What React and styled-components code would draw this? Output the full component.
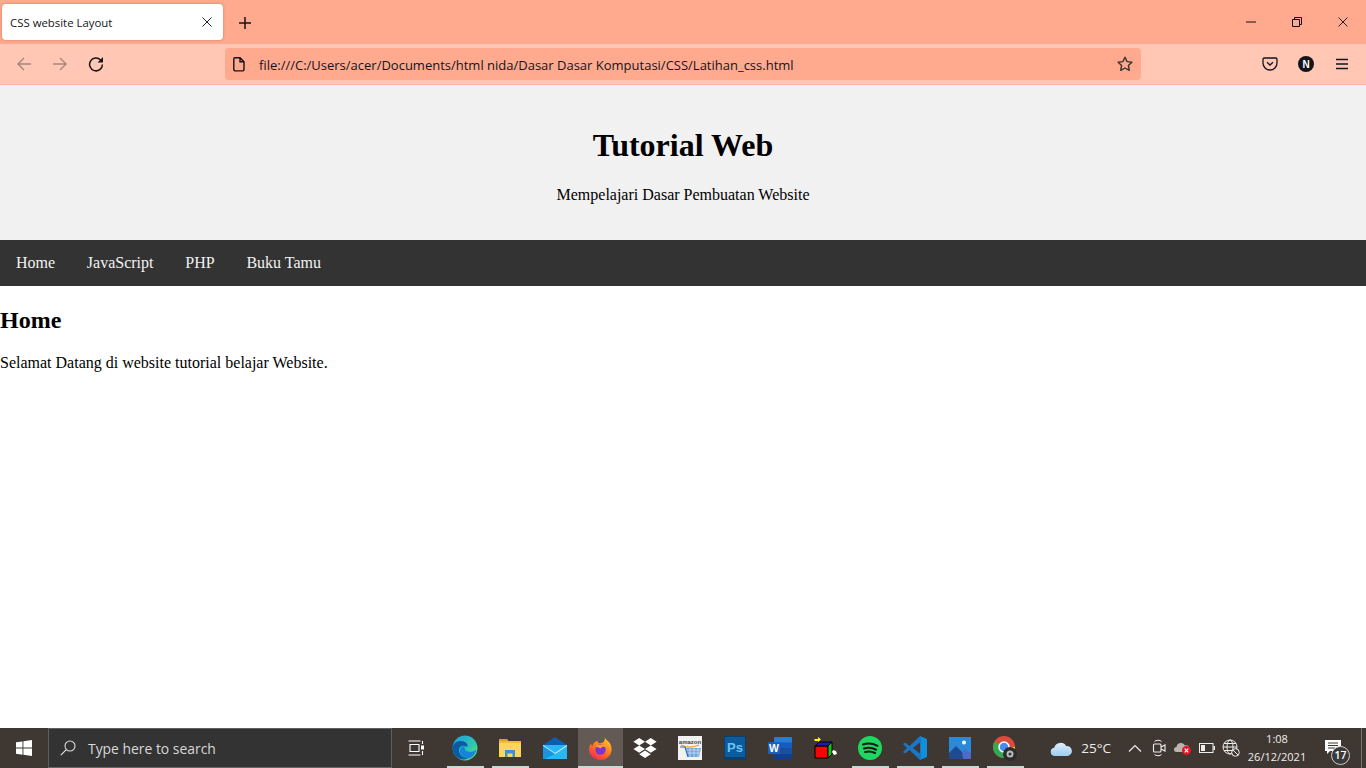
import React from 'react';
import styled, { createGlobalStyle } from 'styled-components';

const GlobalStyle = createGlobalStyle`
    html, body { margin: 0; padding: 0; height: 100%; overflow: hidden; }
    #root { height: 100%; }
`;

const UI_FONT = `'Open Sans', 'Noto Sans', 'Liberation Sans', sans-serif`;

const Screen = styled.div`
    display: flex;
    flex-direction: column;
    height: 768px;
    background: #fff;
`;

const TitleBar = styled.div`
    display: flex;
    align-items: flex-start;
    height: 44px;
    background: #ffa98f;
    flex-shrink: 0;
`;

const Tab = styled.div`
    display: flex;
    align-items: center;
    justify-content: space-between;
    width: 221px;
    height: 36px;
    margin: 4px 0 0 2px;
    padding: 0 11px 0 8px;
    box-sizing: border-box;
    background: #fff;
    border-radius: 4px;
    box-shadow: 0 0 3px rgba(120, 40, 20, .35);
    font: 11.4px ${UI_FONT};
    color: #15141a;
`;

const NewTab = styled.div`
    display: flex;
    align-items: center;
    justify-content: center;
    width: 36px;
    height: 36px;
    margin: 5px 0 0 4px;
`;

const WindowButtons = styled.div`
    display: flex;
    margin-left: auto;
`;

const WindowButton = styled.div`
    display: flex;
    align-items: center;
    justify-content: center;
    width: 46px;
    height: 44px;
`;

const ToolBar = styled.div`
    display: flex;
    align-items: center;
    height: 40px;
    background: #ffc7b4;
    border-bottom: 1px solid #ffb29b;
    flex-shrink: 0;
`;

const NavButtons = styled.div`
    display: flex;
    width: 225px;
    padding-left: 6px;
    box-sizing: border-box;
`;

const ToolButton = styled.div`
    display: flex;
    align-items: center;
    justify-content: center;
    width: 36px;
    height: 32px;
`;

const UrlBar = styled.div`
    display: flex;
    align-items: center;
    width: 916px;
    height: 32px;
    padding: 0 8px 0 7px;
    box-sizing: border-box;
    background: #ffa98f;
    border-radius: 4px;
    color: #15141a;
`;

const UrlText = styled.span`
    flex: 1;
    margin-left: 13px;
    padding-top: 1px;
    font: 13px ${UI_FONT};
    white-space: nowrap;
`;

const ToolRight = styled.div`
    display: flex;
    margin-left: auto;
    padding-right: 6px;
`;

const Avatar = styled.div`
    display: flex;
    align-items: center;
    justify-content: center;
    width: 16px;
    height: 16px;
    border-radius: 50%;
    background: #15141a;
    color: #fff;
    font: bold 10px 'Liberation Sans', sans-serif;
`;

const Page = styled.div`
    flex: 1;
    font-family: 'Liberation Serif', 'Times New Roman', serif;
    font-size: 16px;
    color: #000;
`;

const Header = styled.header`
    height: 155px;
    padding-top: 1px;
    box-sizing: border-box;
    background: #f1f1f1;
    text-align: center;

    h1 {
        margin: 0;
        padding-top: 41px;
        font-size: 32px;
        line-height: 37px;
    }
    p {
        margin: 22px 0 0;
        line-height: 18px;
    }
`;

const Nav = styled.nav`
    display: flex;
    background: #333;
`;

const NavLink = styled.a`
    display: block;
    padding: 14px 15.75px 14px 16px;
    color: #f2f2f2;
    line-height: 18px;
`;

const Main = styled.main`
    h2 {
        margin: 20px 0 0;
        font-size: 24px;
        line-height: 28px;
    }
    p {
        margin: 20px 0 0;
        line-height: 18px;
    }
`;

const TaskBar = styled.div`
    display: flex;
    align-items: stretch;
    height: 40px;
    background: #3f3731;
    color: #fff;
    flex-shrink: 0;
    font-family: ${UI_FONT};
`;

const StartButton = styled.div`
    display: flex;
    align-items: center;
    justify-content: center;
    width: 48px;
`;

const SearchBox = styled.div`
    display: flex;
    align-items: center;
    gap: 12px;
    width: 344px;
    padding-left: 11px;
    box-sizing: border-box;
    background: #333;
    border: 1px solid #5f5f5f;
    border-bottom-color: #666;
    color: #d8d8d8;
    font-size: 13.9px;
`;

const TaskView = styled.div`
    display: flex;
    align-items: center;
    justify-content: center;
    width: 48px;
    margin-right: 2.5px;
`;

const TaskIcon = styled.div`
    position: relative;
    display: flex;
    align-items: center;
    justify-content: center;
    width: 45px;
    flex-shrink: 0;
    background: ${({ active }) => (active ? '#635a55' : 'transparent')};

    &::after {
        content: '';
        display: ${({ running }) => (running ? 'block' : 'none')};
        position: absolute;
        left: ${({ active }) => (active ? '0' : '4px')};
        right: ${({ active }) => (active ? '0' : '4px')};
        bottom: 0;
        height: 2px;
        background: #c6d9d4;
    }
`;

const Tray = styled.div`
    display: flex;
    align-items: center;
    margin-left: auto;
`;

const TrayItem = styled.div`
    display: flex;
    align-items: center;
    justify-content: center;
    width: 24px;
    height: 40px;
`;

const Weather = styled.div`
    display: flex;
    align-items: center;
    gap: 8px;
    margin-right: 12px;
    font-size: 13.5px;
    color: #eee;
`;

const Clock = styled.div`
    display: flex;
    flex-direction: column;
    align-items: center;
    width: 70px;
    margin-left: -1px;
    font-size: 11px;
    line-height: 18px;
    color: #eee;
`;

const Notify = styled.div`
    position: relative;
    display: flex;
    justify-content: center;
    width: 42px;
    height: 40px;
    padding-top: 12px;
    box-sizing: border-box;
`;

const NotifyBadge = styled.div`
    position: absolute;
    top: 18px;
    left: 19px;
    width: 17px;
    height: 17px;
    border: 1px solid #ccc;
    border-radius: 50%;
    background: #3a3a3a;
    color: #fff;
    font-size: 10.5px;
    font-weight: 600;
    line-height: 17px;
    text-align: center;
`;

const ShowDesktop = styled.div`
    align-self: stretch;
    width: 4px;
    margin-left: 7px;
    border-left: 1px solid #7a726c;
`;

const stroke = { fill: 'none', stroke: 'currentColor', strokeWidth: 1.4 };

const Close = () => (
    <svg width="10" height="10" viewBox="0 0 10 10"><path d="M.5 .5l9 9M9.500 .5l-9 9" stroke="#222" strokeWidth="1" /></svg>
);
const Plus = () => (
    <svg width="14" height="14" viewBox="0 0 14 14"><path d="M7 1v12M1 7h12" stroke="#15141a" strokeWidth="1.5" /></svg>
);
const Arrow = ({ flip }) => (
    <svg width="16" height="16" viewBox="0 0 16 16" style={{ transform: flip ? 'scaleX(-1)' : undefined }}>
        <path d="M15 8H2M8 2L2 8l6 6" fill="none" stroke="#a8867a" strokeWidth="1.4" />
    </svg>
);
const Reload = () => (
    <svg width="16" height="16" viewBox="0 0 16 16">
        <path d="M12.600 4A6.400 6.400 0 1 0 14.400 8.500" fill="none" stroke="#15141a" strokeWidth="1.500" />
        <path d="M15 1v5.400H9.600z" fill="#15141a" />
    </svg>
);
const PageIcon = () => (
    <svg width="14" height="16" viewBox="0 0 14 16">
        <path d="M3 1.700h5l4 4v7.600a1.600 1.600 0 0 1-1.600 1.600H3.400a1.600 1.600 0 0 1-1.600-1.600V3a1.400 1.400 0 0 1 1.200-1.300zM8 2v3.700h4" fill="none" stroke="#15141a" strokeWidth="1.400" />
    </svg>
);
const Star = () => (
    <svg width="16" height="16" viewBox="0 0 16 16">
        <path d="M8 1.200l2.100 4.400 4.800.6-3.500 3.300.9 4.800L8 12l-4.300 2.300.9-4.800L1.100 6.200l4.800-.6z" fill="none" stroke="#3c3230" strokeWidth="1.400" strokeLinejoin="round" />
    </svg>
);
const Pocket = () => (
    <svg width="16" height="16" viewBox="0 0 16 16">
        <path d="M2.200 2h11.600c.7 0 1.200.5 1.200 1.200V7a7 7 0 0 1-14 0V3.200C1 2.500 1.500 2 2.200 2z" fill="none" stroke="#15141a" strokeWidth="1.300" />
        <path d="M5 6.200l3 2.800 3-2.800" fill="none" stroke="#15141a" strokeWidth="1.300" />
    </svg>
);
const Menu = () => (
    <svg width="14" height="12" viewBox="0 0 14 12"><path d="M1 1.500h12M1 6h12M1 10.500h12" stroke="#15141a" strokeWidth="1.300" /></svg>
);
const Minimize = () => (
    <svg width="10" height="10" viewBox="0 0 10 10"><path d="M0 5h10" stroke="#111" /></svg>
);
const Restore = () => (
    <svg width="10" height="10" viewBox="0 0 10 10">
        <path d="M.5 2.500h7v7h-7zM2.500 2.500V.5h7v7h-2" fill="none" stroke="#111" />
    </svg>
);

const WindowsLogo = () => (
    <svg width="16" height="16" viewBox="0 0 16 16">
        <path d="M0 2.300l6.500-.9v6.200H0zM7.400 1.300L16 0v7.600H7.400zM0 8.500h6.500v6.200L0 13.800zM7.400 8.500H16V16l-8.600-1.200z" fill="#fff" />
    </svg>
);
const SearchGlass = () => (
    <svg width="16" height="16" viewBox="0 0 16 16">
        <circle cx="10" cy="6" r="5" fill="none" stroke="#ddd" strokeWidth="1.100" />
        <path d="M6.300 9.700L.8 15.200" stroke="#ddd" strokeWidth="1.200" />
    </svg>
);
const TaskViewIcon = () => (
    <svg width="17" height="16" viewBox="0 0 17 16">
        <path d="M.5 1h12M.5 15h12M2 4.500h9v7H2zM14.500 1v3M14.500 11v4" fill="none" stroke="#fff" strokeWidth="1.100" />
        <rect x="13" y="5.500" width="3" height="4" fill="#fff" />
    </svg>
);
const Edge = () => (
    <svg width="26" height="26" viewBox="0 0 24 24">
        <defs>
            <linearGradient id="edgeA" x1="0" y1="0" x2="1" y2="1">
                <stop offset="0" stopColor="#1b9de2" />
                <stop offset=".6" stopColor="#30c8b0" />
                <stop offset="1" stopColor="#6ee86a" />
            </linearGradient>
        </defs>
        <circle cx="12" cy="12" r="11.500" fill="url(#edgeA)" />
        <path d="M.5 12C1 6 7 4.500 11 6c3 1.200 4 3.500 3 5-3-2-8-1-7.500 4 .5 4 5 7 9 6.500-1.500.8-3 1-4.500 1C5 22.500.5 18 .5 12z" fill="#0c59a4" />
        <path d="M13 14.500c2.500 1.500 7 1 9.500-1-1 4.500-4 7.500-7.500 8-3 .5-6.500-2-7.500-5-.8-3 1-6.500 5-6.500-1.500 1-1 3.300.5 4.500z" fill="#1685d6" />
    </svg>
);
const Explorer = () => (
    <svg width="22" height="20" viewBox="0 0 22 20">
        <path d="M0 1h8l2 2.500H0z" fill="#d9a326" />
        <rect y="3" width="22" height="16" fill="#fbd65e" />
        <rect y="3" width="22" height="2" fill="#f0bb3a" />
        <path d="M6 19v-7h10v7h-2.500v-3.500h-5V19z" fill="#3c8fd8" />
    </svg>
);
const Mail = () => (
    <svg width="24" height="22" viewBox="0 0 24 22">
        <path d="M0 8L12 0l12 8v3H0z" fill="#0d5fae" />
        <rect y="8" width="24" height="14" fill="#29b6f6" />
        <path d="M0 8l12 8 12-8v1L12 17 0 9z" fill="#e8f6ff" />
        <path d="M0 22V9l12 8-10 5z" fill="#1a93e0" />
    </svg>
);
const Firefox = () => (
    <svg width="25" height="25" viewBox="0 0 24 24">
        <defs>
            <linearGradient id="foxA" x1="0.8" y1="0" x2="0.2" y2="1">
                <stop offset="0" stopColor="#ffca2c" />
                <stop offset=".5" stopColor="#ff7a1a" />
                <stop offset="1" stopColor="#f5215c" />
            </linearGradient>
        </defs>
        <path d="M16 1c1 3 3 3 5 6 2.500 4 2 9-.5 12-2.500 3-6 4.500-9.500 4C5 22.500.5 17.500 1 12c.2-2 1-3.500 2-5 0 1 .5 2 1.200 2.500C5 7 7 5 9 4.500 9 6 10 7 12 7c3 0 5-3 4-6z" fill="url(#foxA)" />
        <circle cx="12" cy="13" r="5" fill="#7a35d0" />
        <path d="M7 10c3-2 8-3 11 1-2-1-5-1-6 1-1-1-3-1-5-2z" fill="#ff9a2e" />
    </svg>
);
const Dropbox = () => (
    <svg width="24" height="22" viewBox="0 0 24 22">
        <path d="M6.200 1L12 4.700 6.200 8.400.4 4.700zM17.800 1l5.800 3.700-5.800 3.700L12 4.700zM.4 12.100l5.800-3.700 5.800 3.700-5.800 3.700zM17.800 8.400l5.800 3.700-5.800 3.700-5.800-3.700zM6.200 17.200L12 13.500l5.800 3.700L12 21z" fill="#fff" />
    </svg>
);
const Amazon = () => (
    <svg width="24" height="24" viewBox="0 0 24 24">
        <rect width="24" height="24" fill="#f2f2f2" />
        <text x="12" y="7.500" fontSize="6" fontFamily="Liberation Sans, sans-serif" fontWeight="bold" fill="#444" textAnchor="middle">amazon</text>
        <path d="M3 9c5 2.500 12 2.500 18 0" fill="none" stroke="#f39a1c" strokeWidth="1.200" />
        <path d="M8 12h15l-2 9H10z" fill="#6aa5dc" />
        <path d="M8 14h14M9 17h13M12 12v9M16 12v9M20 12v9" stroke="#d8e8f6" strokeWidth=".7" />
        <path d="M2 11h5l3 10" fill="none" stroke="#2f6fb0" strokeWidth="1.200" />
    </svg>
);
const Photoshop = () => (
    <svg width="22" height="24" viewBox="0 0 22 24">
        <rect width="22" height="24" rx="2" fill="#0a3f70" />
        <rect x="1" y="1" width="20" height="20" rx="1" fill="#0b5c9c" />
        <text x="11" y="16" fontSize="13" fontFamily="Liberation Sans, sans-serif" fontWeight="bold" fill="#6cc4f4" textAnchor="middle">Ps</text>
    </svg>
);
const Word = () => (
    <svg width="24" height="22" viewBox="0 0 24 22">
        <rect x="6" y="0" width="18" height="22" rx="1" fill="#2b7cd3" />
        <rect x="6" y="5.500" width="18" height="5.500" fill="#185abd" />
        <rect x="6" y="11" width="18" height="5.500" fill="#1a4fa0" />
        <rect x="6" y="16.500" width="18" height="5.500" fill="#103f91" />
        <rect x="0" y="5" width="12" height="12" rx="1" fill="#1c5fc0" />
        <text x="6" y="15" fontSize="10.500" fontFamily="Liberation Sans, sans-serif" fontWeight="bold" fill="#fff" textAnchor="middle">W</text>
    </svg>
);
const Cube = () => (
    <svg width="24" height="24" viewBox="0 0 24 24">
        <path d="M2 10h13v12H2z" fill="#f00" stroke="#000" />
        <path d="M2 10l4-4h13l-4 4z" fill="#1a1ab4" stroke="#000" />
        <path d="M15 10l4-4v12l-4 4z" fill="#18c018" stroke="#000" />
        <path d="M1 3h4V1l3 2.500L5 6V5H2z" fill="#ff0" />
        <path d="M20 14l3 1 1 3-3 1-2-3z" fill="#fff" />
    </svg>
);
const Spotify = () => (
    <svg width="24" height="24" viewBox="0 0 24 24">
        <circle cx="12" cy="12" r="12" fill="#1ed760" />
        <path d="M5 8.500c5-1.500 10-1 14.500 1.300M6 12.500c4-1.200 8.500-.8 12 1.200M7 16c3.500-1 7-.6 10 1" fill="none" stroke="#191414" strokeWidth="2" strokeLinecap="round" />
    </svg>
);
const VSCode = () => (
    <svg width="24" height="24" viewBox="0 0 24 24">
        <path d="M17 0l7 3v18l-7 3z" fill="#0f8fdc" />
        <path d="M17 0L6.500 10 2 6.500 0 8l4 4-4 4 2 1.500L6.500 14 17 24l1-3V3z" fill="#1a76c4" />
        <path d="M17 6.500L10 12l7 5.500z" fill="#3f3731" />
    </svg>
);
const Photos = () => (
    <svg width="22" height="22" viewBox="0 0 22 22">
        <rect width="22" height="22" fill="#2b8ad8" />
        <circle cx="15" cy="5.500" r="2" fill="#fff" />
        <path d="M0 16l7-7 6 6 3-2 6 4v5H0z" fill="#1f4a90" />
        <path d="M13 15l3-3 6 4v6H14z" fill="#4a6cc8" />
    </svg>
);
const Chrome = () => (
    <svg width="26" height="26" viewBox="0 0 26 26">
        <circle cx="12" cy="12" r="11" fill="#dd4b3d" />
        <path d="M12 12L2.500 6.500A11 11 0 0 0 12 23z" fill="#35a853" />
        <path d="M12 12h11a11 11 0 0 1-11 11z" fill="#fbc02d" />
        <circle cx="12" cy="12" r="5" fill="#4a8af4" stroke="#fff" strokeWidth="1.500" />
        <circle cx="18" cy="19" r="7" fill="#2c2c2c" />
        <circle cx="18" cy="19" r="3.500" fill="#bbb" />
        <circle cx="18" cy="19" r="1.500" fill="#333" />
    </svg>
);
const Cloud = () => (
    <svg width="23" height="17" viewBox="0 0 24 18">
        <defs>
            <linearGradient id="cloudA" x1="0" y1="0" x2="0" y2="1">
                <stop offset="0" stopColor="#dceffc" />
                <stop offset="1" stopColor="#9ccdf0" />
            </linearGradient>
        </defs>
        <path d="M5 17a4.500 4.500 0 0 1-.8-8.900A7 7 0 0 1 17 6.500a5.300 5.300 0 0 1 1.500 10.500z" fill="url(#cloudA)" />
    </svg>
);
const Chevron = () => (
    <svg width="14" height="8" viewBox="0 0 14 8"><path d="M1 7.500l6-6 6 6" fill="none" stroke="#eee" strokeWidth="1.200" /></svg>
);
const MeetIcon = () => (
    <svg width="14" height="18" viewBox="0 0 14 18" style={{ color: '#eee' }}>
        <path d="M2.500 2.500C4 .8 8 .8 9.500 2.500M2.500 15.500c1.500 1.700 5.500 1.700 7 0" {...stroke} strokeWidth="1" />
        <rect x="1.500" y="5" width="7.500" height="8" rx="1" {...stroke} strokeWidth="1.100" />
        <path d="M9 8l4-2v6l-4-2" {...stroke} strokeWidth="1.100" />
    </svg>
);
const OneDriveOff = () => (
    <svg width="18" height="16" viewBox="0 0 18 16">
        <path d="M2.500 12a2.500 2.500 0 0 1 0-5A4.500 4.500 0 0 1 11 5.500 3.300 3.300 0 0 1 13 12z" fill="#b9b6b2" />
        <circle cx="12.500" cy="10.500" r="4.500" fill="#e81123" />
        <path d="M10.700 8.700l3.600 3.600M14.300 8.700l-3.600 3.600" stroke="#fff" strokeWidth="1.200" />
    </svg>
);
const Battery = () => (
    <svg width="16" height="10" viewBox="0 0 16 10">
        <rect x=".5" y=".5" width="13.500" height="9" fill="none" stroke="#eee" />
        <rect x="2" y="2" width="4" height="6" fill="#eee" />
        <rect x="14.500" y="3" width="1.500" height="4" fill="#eee" />
    </svg>
);
const Globe = () => (
    <svg width="18" height="18" viewBox="0 0 18 18" style={{ color: '#eee' }}>
        <circle cx="8" cy="8" r="7" {...stroke} strokeWidth="1" />
        <ellipse cx="8" cy="8" rx="3" ry="7" {...stroke} strokeWidth="1" />
        <path d="M1 8h14M2 4.500h12M2 11.500h12" {...stroke} strokeWidth="1" />
        <circle cx="13.500" cy="13.500" r="3.800" fill="#3f3731" stroke="#eee" />
        <path d="M11 11l5 5" stroke="#eee" />
    </svg>
);
const NotifyIcon = () => (
    <svg width="16" height="14" viewBox="0 0 16 14">
        <path d="M0 0h16v11H5l-3 3v-3H0z" fill="#fff" />
        <path d="M3 3h10M3 5.500h10M3 8h7" stroke="#3f3731" />
    </svg>
);

const taskIcons = [
    { key: 'edge', Icon: Edge, running: true },
    { key: 'explorer', Icon: Explorer, running: true },
    { key: 'mail', Icon: Mail },
    { key: 'firefox', Icon: Firefox, running: true, active: true },
    { key: 'dropbox', Icon: Dropbox },
    { key: 'amazon', Icon: Amazon },
    { key: 'ps', Icon: Photoshop },
    { key: 'word', Icon: Word },
    { key: 'cube', Icon: Cube },
    { key: 'spotify', Icon: Spotify, running: true },
    { key: 'vscode', Icon: VSCode, running: true },
    { key: 'photos', Icon: Photos, running: true },
    { key: 'chrome', Icon: Chrome, running: true },
];

const navLinks = ['Home', 'JavaScript', 'PHP', 'Buku Tamu'];

export default () => {
    return (
        <Screen>
            <GlobalStyle />
            <TitleBar>
                <Tab>
                    <span>CSS website Layout</span>
                    <Close />
                </Tab>
                <NewTab><Plus /></NewTab>
                <WindowButtons>
                    <WindowButton><Minimize /></WindowButton>
                    <WindowButton><Restore /></WindowButton>
                    <WindowButton><Close /></WindowButton>
                </WindowButtons>
            </TitleBar>
            <ToolBar>
                <NavButtons>
                    <ToolButton><Arrow /></ToolButton>
                    <ToolButton><Arrow flip /></ToolButton>
                    <ToolButton><Reload /></ToolButton>
                </NavButtons>
                <UrlBar>
                    <PageIcon />
                    <UrlText>file:///C:/Users/acer/Documents/html nida/Dasar Dasar Komputasi/CSS/Latihan_css.html</UrlText>
                    <Star />
                </UrlBar>
                <ToolRight>
                    <ToolButton><Pocket /></ToolButton>
                    <ToolButton><Avatar>N</Avatar></ToolButton>
                    <ToolButton><Menu /></ToolButton>
                </ToolRight>
            </ToolBar>
            <Page>
                <Header>
                    <h1>Tutorial Web</h1>
                    <p>Mempelajari Dasar Pembuatan Website</p>
                </Header>
                <Nav>
                    {navLinks.map(link => <NavLink key={link}>{link}</NavLink>)}
                </Nav>
                <Main>
                    <h2>Home</h2>
                    <p>Selamat Datang di website tutorial belajar Website.</p>
                </Main>
            </Page>
            <TaskBar>
                <StartButton><WindowsLogo /></StartButton>
                <SearchBox>
                    <SearchGlass />
                    <span>Type here to search</span>
                </SearchBox>
                <TaskView><TaskViewIcon /></TaskView>
                {taskIcons.map(({ key, Icon, running, active }) => (
                    <TaskIcon key={key} running={running} active={active}><Icon /></TaskIcon>
                ))}
                <Tray>
                    <Weather>
                        <Cloud />
                        <span>25°C</span>
                    </Weather>
                    <TrayItem><Chevron /></TrayItem>
                    <TrayItem><MeetIcon /></TrayItem>
                    <TrayItem><OneDriveOff /></TrayItem>
                    <TrayItem><Battery /></TrayItem>
                    <TrayItem><Globe /></TrayItem>
                    <Clock>
                        <span>1:08</span>
                        <span>26/12/2021</span>
                    </Clock>
                    <Notify>
                        <NotifyIcon />
                        <NotifyBadge>17</NotifyBadge>
                    </Notify>
                    <ShowDesktop />
                </Tray>
            </TaskBar>
        </Screen>
    );
};
